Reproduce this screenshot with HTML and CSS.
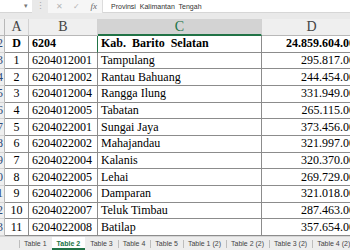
FILE: index.html
```html
<!DOCTYPE html>
<html lang="id">
<head>
    <meta charset="UTF-8">
    <title>Table 2 - Kab. Barito Selatan</title>
    <link rel="stylesheet" href="styles.css">
</head>
<body>
    <div class="window">
        <div class="formula-bar">
            <div class="name-box"><span class="caret">▾</span></div>
            <div class="grip">⋮</div>
            <div class="formula-box">
                <div class="fx-buttons">
                    <span class="fx-btn">✕</span>
                    <span class="fx-btn">✓</span>
                    <span class="fx-btn fx">fx</span>
                </div>
                <div class="formula-text">Provinsi  Kalimantan  Tengah</div>
            </div>
        </div>

        <div class="sheet">
            <div class="corner"></div>
            <div class="col-head">A</div>
            <div class="col-head">B</div>
            <div class="col-head selected">C</div>
            <div class="col-head">D</div>

            <div class="row-head">2</div>
            <div class="cell center bold">D</div>
            <div class="cell bold">6204</div>
            <div class="cell bold active">Kab.  Barito  Selatan</div>
            <div class="cell num bold">24.859.604.000</div>

            <div class="row-head">3</div>
            <div class="cell center">1</div>
            <div class="cell">6204012001</div>
            <div class="cell">Tampulang</div>
            <div class="cell num">295.817.000</div>

            <div class="row-head">4</div>
            <div class="cell center">2</div>
            <div class="cell">6204012002</div>
            <div class="cell">Rantau Bahuang</div>
            <div class="cell num">244.454.000</div>

            <div class="row-head">5</div>
            <div class="cell center">3</div>
            <div class="cell">6204012004</div>
            <div class="cell">Rangga Ilung</div>
            <div class="cell num">331.949.000</div>

            <div class="row-head">6</div>
            <div class="cell center">4</div>
            <div class="cell">6204012005</div>
            <div class="cell">Tabatan</div>
            <div class="cell num">265.115.000</div>

            <div class="row-head">7</div>
            <div class="cell center">5</div>
            <div class="cell">6204022001</div>
            <div class="cell">Sungai Jaya</div>
            <div class="cell num">373.456.000</div>

            <div class="row-head">8</div>
            <div class="cell center">6</div>
            <div class="cell">6204022002</div>
            <div class="cell">Mahajandau</div>
            <div class="cell num">321.997.000</div>

            <div class="row-head">9</div>
            <div class="cell center">7</div>
            <div class="cell">6204022004</div>
            <div class="cell">Kalanis</div>
            <div class="cell num">320.370.000</div>

            <div class="row-head">10</div>
            <div class="cell center">8</div>
            <div class="cell">6204022005</div>
            <div class="cell">Lehai</div>
            <div class="cell num">269.729.000</div>

            <div class="row-head">11</div>
            <div class="cell center">9</div>
            <div class="cell">6204022006</div>
            <div class="cell">Damparan</div>
            <div class="cell num">321.018.000</div>

            <div class="row-head">12</div>
            <div class="cell center">10</div>
            <div class="cell">6204022007</div>
            <div class="cell">Teluk Timbau</div>
            <div class="cell num">287.463.000</div>

            <div class="row-head">13</div>
            <div class="cell center">11</div>
            <div class="cell">6204022008</div>
            <div class="cell">Batilap</div>
            <div class="cell num">357.654.000</div>
        </div>

        <div class="tabs">
            <div class="tab">Table 1</div>
            <div class="tab active">Table 2</div>
            <div class="tab">Table 3</div>
            <div class="tab">Table 4</div>
            <div class="tab">Table 5</div>
            <div class="tab">Table 1 (2)</div>
            <div class="tab">Table 2 (2)</div>
            <div class="tab">Table 3 (2)</div>
            <div class="tab">Table 4 (2)</div>
            <div class="tab">Table 5 (2)</div>
        </div>
    </div>
</body>
</html>
```

FILE: styles.css
```css
* {
    margin: 0;
    padding: 0;
    box-sizing: border-box;
}

body {
    background-color: #fff;
    font-family: 'Liberation Serif', serif;
    color: #000;
}

.window {
    width: 350px;
    height: 250px;
    overflow: hidden;
    display: flex;
    flex-direction: column;
}

/* formula bar */

.formula-bar {
    height: 19px;
    flex-shrink: 0;
    display: flex;
    align-items: flex-start;
    background-color: #e9e9e9;
    font-family: 'Liberation Sans', sans-serif;
}

.name-box {
    width: 32px;
    height: 13px;
    background-color: #fff;
    border-bottom: 1px solid #d6d6d6;
    display: flex;
    justify-content: flex-end;
    align-items: center;
    padding-right: 4px;
}

.caret {
    font-size: 7px;
    color: #777;
}

.grip {
    width: 16px;
    height: 13px;
    text-align: center;
    font-size: 9px;
    line-height: 13px;
    color: #a8a8a8;
}

.formula-box {
    flex: 1;
    height: 13px;
    display: flex;
    align-items: center;
    background-color: #fff;
    border-bottom: 1px solid #d6d6d6;
}

.fx-buttons {
    width: 55px;
    height: 13px;
    display: flex;
    align-items: center;
    justify-content: space-around;
    padding-left: 3px;
    border-right: 1px solid #dcdcdc;
    background-color: #f6f6f6;
}

.fx-btn {
    font-size: 8px;
    color: #b4b4b4;
}

.fx {
    font-family: 'Liberation Serif', serif;
    font-style: italic;
    font-size: 9px;
    color: #666;
}

.formula-text {
    padding-left: 8px;
    font-size: 7px;
    color: #333;
    white-space: pre;
}

/* sheet grid */

.sheet {
    flex: 1;
    margin-left: -16px;
    display: grid;
    grid-template-columns: 21px 24px 69px 164px 100px;
    grid-template-rows: 17px repeat(12, 1fr);
    overflow: hidden;
}

.corner,
.col-head,
.row-head {
    background-color: #efefef;
    color: #444;
}

.col-head {
    display: flex;
    align-items: center;
    justify-content: center;
    font-size: 14px;
    border-right: 1px solid #d2d2d2;
    border-bottom: 1px solid #b8b8b8;
}

.col-head.selected {
    background-color: #d3d3d3;
    color: #217346;
    border-bottom: 2px solid #217346;
}

.corner {
    border-right: 1px solid #b8b8b8;
    border-bottom: 1px solid #b8b8b8;
}

.row-head {
    display: flex;
    align-items: center;
    justify-content: flex-end;
    padding-right: 1px;
    font-size: 12px;
    color: #2b4a7a;
    border-right: 1px solid #b8b8b8;
    border-bottom: 1px solid #d2d2d2;
}

.cell {
    display: flex;
    align-items: center;
    padding: 0 3px;
    font-size: 12px;
    white-space: pre;
    border-right: 1px solid #8c8c8c;
    border-bottom: 1px solid #8c8c8c;
}

.cell.center {
    justify-content: center;
}

.cell.num {
    justify-content: flex-end;
    padding-right: 0;
}

.cell.bold {
    font-weight: bold;
}

.cell.active {
    border-left: 1px solid #217346;
    margin-left: -1px;
    padding-left: 3px;
}

/* sheet tabs */

.tabs {
    height: 14px;
    flex-shrink: 0;
    display: flex;
    padding-left: 19px;
    background-color: #ededed;
    border-top: 1px solid #d6d6d6;
    font-family: 'Liberation Sans', sans-serif;
    font-size: 7px;
    color: #444;
}

.tab {
    display: flex;
    align-items: center;
    padding: 0 5px 0 5px;
    white-space: nowrap;
    background: linear-gradient(#bdbdbd, #bdbdbd) left center / 1px 8px no-repeat;
}

.tab.active {
    background: #fff;
    color: #217346;
    font-weight: bold;
    border-bottom: 2px solid #217346;
    padding-top: 2px;
}

.tab.active + .tab {
    background-image: none;
}
```
